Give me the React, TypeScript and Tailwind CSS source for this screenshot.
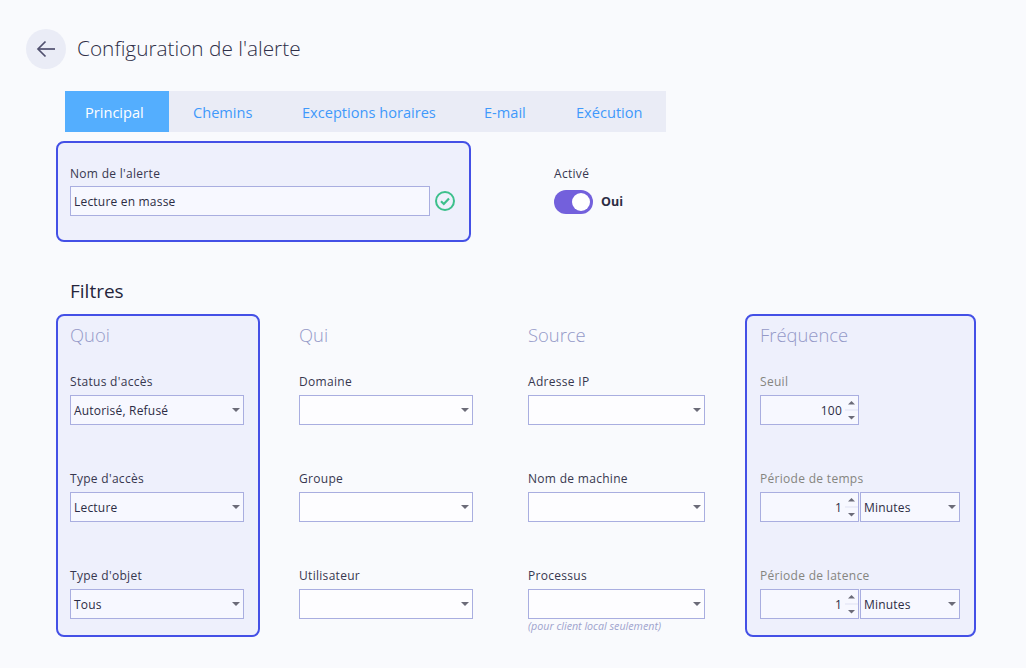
import React from "react";

const font = "font-['Open_Sans','Noto_Sans',sans-serif]";

function Caret() {
  return (
    <svg width="8" height="4" viewBox="0 0 8 4" className="absolute right-[3px] top-[12px]">
      <path d="M0 0H8L4 4Z" fill="#6b6b78" />
    </svg>
  );
}

function Select({ value = "", w = "w-full", bg = "bg-[#f7f8ff]" }: { value?: string; w?: string; bg?: string }) {
  return (
    <div className={`relative h-[30px] ${w} border border-[#a9aee0] ${bg} pl-[3px] text-[12px] leading-[29px] tracking-[0.2px] text-[#2c2c44]`}>
      {value}
      <Caret />
    </div>
  );
}

function Spin({ value }: { value: string }) {
  return (
    <div className="relative h-[30px] w-[99px] shrink-0 border border-[#a9aee0] bg-[#f7f8ff] pr-[16px] text-right text-[12px] leading-[29px] tracking-[0.2px] text-[#2c2c44]">
      {value}
      <svg width="13" height="24" viewBox="0 0 13 24" className="absolute right-[0px] top-[2px]">
        <path d="M3 6.5L6.5 3L10 6.5Z" fill="#6b6b78" />
        <path d="M0 12H13" stroke="#dfe1f3" strokeWidth="1" />
        <path d="M3 18H10L6.5 21.5Z" fill="#6b6b78" />
      </svg>
    </div>
  );
}

function Field({ label, muted, children }: { label: string; muted?: boolean; children: React.ReactNode }) {
  return (
    <div className="h-[97px]">
      <div className={`h-[21px] text-[12px] leading-[16px] tracking-[0.3px] ${muted ? "text-[#85857f]" : "text-[#37374f]"}`}>{label}</div>
      {children}
    </div>
  );
}

function Heading({ children }: { children: React.ReactNode }) {
  return <div className="h-[58px] text-[18.4px] font-light leading-[38px] text-[#9499c8]">{children}</div>;
}

const white = "bg-[#fdfdff]";

export default function App() {
  return (
    <div className={`${font} h-[668px] w-[1026px] overflow-hidden bg-[#f9fafd]`}>
      <div className="flex items-center pl-[26px] pt-[29px]">
        <div className="flex h-[40px] w-[40px] items-center justify-center rounded-full bg-[#eaecf6]">
          <svg width="20" height="18" viewBox="0 0 20 18" fill="none" stroke="#50506e" strokeWidth="1.7">
            <path d="M19 9H2" />
            <path d="M9.5 1.5L2 9L9.5 16.5" />
          </svg>
        </div>
        <div className="ml-[11px] -mt-[2px] text-[20.8px] font-light leading-[28px] text-[#2f2f48]">Configuration de l'alerte</div>
      </div>

      <div className="ml-[65px] mt-[22px] flex h-[41px] w-[601px] bg-[#eaecf6] text-[14.6px] leading-[43px] text-[#3f99fb]">
        <div className="w-[104px] bg-[#54aefe] pl-[20px] text-white">Principal</div>
        <div className="w-[109px] pl-[24px]">Chemins</div>
        <div className="w-[182px] pl-[24px]">Exceptions horaires</div>
        <div className="w-[92px] pl-[24px]">E-mail</div>
        <div className="pl-[24px]">Exécution</div>
      </div>

      <div className="flex">
        <div className="ml-[56px] mt-[9px] h-[101px] w-[415px] rounded-[8px] border-2 border-[#4450e6] bg-[#eef0fc] pl-[12px] pt-[23px]">
          <div className="h-[20px] text-[12px] leading-[16px] tracking-[0.3px] text-[#37374f]">Nom de l'alerte</div>
          <div className="flex items-center">
            <div className="h-[30px] w-[360px] border border-[#a9aee0] bg-[#f7f8ff] pl-[3px] text-[12px] leading-[29px] tracking-[0.2px] text-[#2c2c44]">Lecture en masse</div>
            <svg width="20" height="20" viewBox="0 0 20 20" fill="none" className="ml-[5px]">
              <circle cx="10" cy="10" r="9" stroke="#3cc08c" strokeWidth="2" />
              <path d="M6 10.3L8.8 13L14 7.5" stroke="#3cc08c" strokeWidth="2.2" />
            </svg>
          </div>
        </div>
        <div className="ml-[83px] mt-[33px]">
          <div className="h-[25px] pt-[1px] text-[12px] leading-[16px] tracking-[0.3px] text-[#37374f]">Activé</div>
          <div className="flex items-center">
            <div className="flex h-[24px] w-[39px] items-center justify-end rounded-full bg-[#7360dc] pr-[3px]">
              <div className="h-[18px] w-[18px] rounded-full bg-white" />
            </div>
            <div className="ml-[8px] text-[12.5px] font-bold text-[#2c2c44]">Oui</div>
          </div>
        </div>
      </div>

      <div className="ml-[70px] mt-[35px] h-[37px] text-[19px] leading-[28px] text-[#25253c]">Filtres</div>

      <div className="flex">
        <div className="ml-[56px] h-[323px] w-[204px] rounded-[8px] border-2 border-[#4450e6] bg-[#eef0fc] pl-[12px] pr-[14px]">
          <Heading>Quoi</Heading>
          <Field label="Status d'accès"><Select value="Autorisé, Refusé" /></Field>
          <Field label="Type d'accès"><Select value="Lecture" /></Field>
          <Field label="Type d'objet"><Select value="Tous" /></Field>
        </div>
        <div className="ml-[39px] w-[174px] pt-[2px]">
          <Heading>Qui</Heading>
          <Field label="Domaine"><Select bg={white} /></Field>
          <Field label="Groupe"><Select bg={white} /></Field>
          <Field label="Utilisateur"><Select bg={white} /></Field>
        </div>
        <div className="ml-[55px] w-[177px] pt-[2px]">
          <Heading>Source</Heading>
          <Field label="Adresse IP"><Select bg={white} /></Field>
          <Field label="Nom de machine"><Select bg={white} /></Field>
          <Field label="Processus">
            <Select bg={white} />
            <div className="text-[10.7px] italic leading-[14px] text-[#9ea3cd]">(pour client local seulement)</div>
          </Field>
        </div>
        <div className="ml-[40px] h-[323px] w-[231px] rounded-[8px] border-2 border-[#4450e6] bg-[#eef0fc] px-[13px]">
          <Heading>Fréquence</Heading>
          <Field label="Seuil" muted><Spin value="100" /></Field>
          <Field label="Période de temps" muted>
            <div className="flex gap-[1px]"><Spin value="1" /><Select value="Minutes" w="w-[100px]" /></div>
          </Field>
          <Field label="Période de latence" muted>
            <div className="flex gap-[1px]"><Spin value="1" /><Select value="Minutes" w="w-[100px]" /></div>
          </Field>
        </div>
      </div>
    </div>
  );
}
